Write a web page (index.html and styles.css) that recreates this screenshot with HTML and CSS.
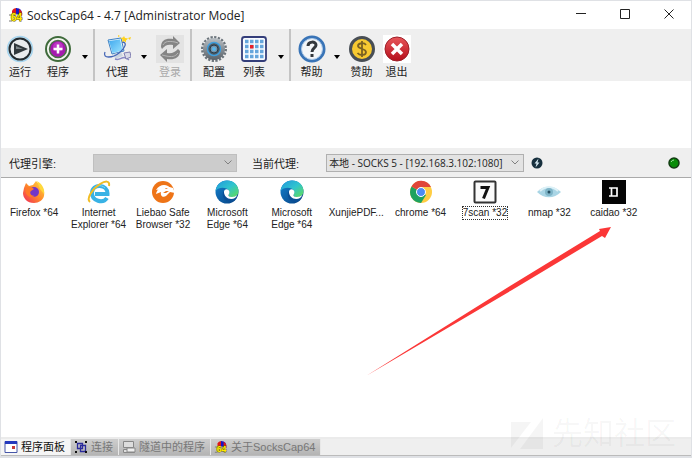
FILE: index.html
```html
<!DOCTYPE html>
<html lang="zh-CN">
<head>
  <meta charset="UTF-8" />
  <title>SocksCap64 - 4.7</title>
  <meta name="viewport" content="width=device-width, initial-scale=1.0"/>
  <link rel="stylesheet" href="styles.css">
</head>
<body>
  <!-- shared icons -->
  <svg class="defs" aria-hidden="true">
    <defs>
      <linearGradient id="edgeTop" x1="0" y1="0" x2="1" y2="1"><stop offset="0" stop-color="#2196dc"/><stop offset=".5" stop-color="#2fc4cf"/><stop offset="1" stop-color="#62dd55"/></linearGradient>
      <linearGradient id="edgeLow" x1="0" y1="0" x2="1" y2="1"><stop offset="0" stop-color="#1482cf"/><stop offset="1" stop-color="#073f80"/></linearGradient>
      <linearGradient id="metal" x1="0" y1="0" x2="0" y2="1"><stop offset="0" stop-color="#b9bfc4"/><stop offset="1" stop-color="#596168"/></linearGradient>
      <linearGradient id="fire" x1="1" y1="0" x2="0" y2="1"><stop offset="0" stop-color="#ffe047"/><stop offset=".5" stop-color="#ff8a2a"/><stop offset="1" stop-color="#f0255e"/></linearGradient>
      <linearGradient id="red" x1="0" y1="0" x2="0" y2="1"><stop offset="0" stop-color="#e8565a"/><stop offset="1" stop-color="#b50f1b"/></linearGradient>
      <linearGradient id="screen" x1="0" y1="0" x2="1" y2="1"><stop offset="0" stop-color="#40a8ee"/><stop offset="1" stop-color="#9be4ff"/></linearGradient>
    </defs>
    <symbol id="app" viewBox="0 0 16 16">
      <path d="M4 4Q5 1 9 1v6H4z" fill="#e01818"/>
      <path d="M8 1Q15 1 14 9L11 8 8 7z" fill="#1616c8"/>
      <path d="M11 2Q15 4 14 9l-3-2z" fill="#e01818"/>
      <path d="M1 8h3M1 14h3" stroke="#777"/>
      <text class="app-digits" x="3" y="14">64</text>
    </symbol>
    <symbol id="edge" viewBox="0 0 24 24">
      <circle cx="12" cy="12" r="11.500" fill="url(#edgeLow)"/>
      <path d="M.6 11C1.500 4.500 6.500.5 12 .5c7 0 11.500 5 11.500 10.500 0 4-3 6-6.500 6-2.500 0-4-1-3.500-2 1.500-2 1-5-2-6.500C8 7 3 7.500.6 11z" fill="url(#edgeTop)"/>
      <path d="M8.500 11c-2 4 0 9.500 5 10.800 3 .6 6-1 8-3.800-5 2.500-11 .5-13-7z" fill="#0a4f96"/>
      <path d="M9 11.500C9.500 9 12 8.500 13.500 10c1.500 1.500 1 3.500 0 5-.5 1 1 2 3.500 2 2 0 4-.7 5.200-2-1 2.500-3 4-6 4-4 0-7.500-3.500-7.200-7.500z" fill="#fff"/>
    </symbol>
  </svg>

  <div class="window">
    <header class="titlebar">
      <svg class="app-icon"><use href="#app"/></svg>
      <h1>SocksCap64 - 4.7 [Administrator Mode]</h1>
      <div class="window-controls">
        <button aria-label="Minimize"><svg viewBox="0 0 10 10"><path d="M0 4.500h10"/></svg></button>
        <button aria-label="Maximize"><svg viewBox="0 0 10 10"><path d="M.5.5h9v9h-9z"/></svg></button>
        <button aria-label="Close"><svg viewBox="0 0 10 10"><path d="M.5.5l9 9M9.500.5l-9 9"/></svg></button>
      </div>
    </header>

    <nav class="toolbar">
      <div class="group">
        <button class="tool">
          <svg viewBox="0 0 28 28"><circle cx="14" cy="14" r="12.500" fill="#d7e5ed" stroke="#a5d4ee" stroke-width="1.500"/><circle cx="14" cy="14" r="10.500" fill="#e8ebed" stroke="#222b30" stroke-width="2"/><path d="M8 8l14 6-14 6z" fill="#30383c"/><path d="M10 11l7 3h-7z" fill="#7d868a"/></svg>
          <span>运行</span>
        </button>
        <button class="tool">
          <svg viewBox="0 0 28 28"><circle cx="14" cy="14" r="12" fill="#f5f8f2" stroke="#3f6b3b" stroke-width="2"/><circle cx="14" cy="14" r="8.500" fill="#a51bae" stroke="#4a7047" stroke-width="1.500"/><circle cx="14" cy="12" r="5" fill="#bd37c5"/><path d="M14 9.500v9M9.500 14h9" stroke="#fff" stroke-width="2.500"/></svg>
          <span>程序</span>
        </button>
        <button class="drop" aria-label="程序菜单"></button>
      </div>
      <div class="group">
        <button class="tool">
          <svg viewBox="0 0 28 28"><path d="M5 5l13-2 3 13-12 3z" fill="#e7f3fb" stroke="#3f83c5"/><path d="M6 6l11-1.500 2.500 11L9.500 18z" fill="url(#screen)"/><path d="M11 19l7-2 2 4-8 3z" fill="#ccd5e0"/><path d="M19 7c6 0 3 6-3 11S-1 24 2 17" fill="none" stroke="#4365b5" stroke-width="1.300"/><path d="M12 24c5 2 7-3 11-1l3 2" fill="none" stroke="#8788c5" stroke-width="1.500"/><path d="M21 18l6-1 1 5-5 2z" fill="#d9dae8" stroke="#8280b2"/><path d="M21 1l1 2 3 .5-2 2v2L21 6l-2 1 .5-2.500L17 3l3-.5zM25 3l3-1-1 3zM15 0l2 1-2 1z" fill="#ffd21c"/></svg>
          <span>代理</span>
        </button>
        <button class="drop" aria-label="代理菜单"></button>
        <button class="tool" disabled>
          <svg viewBox="0 0 28 28"><path fill="#e3e3e3" d="M0 0h28v28H0z"/><path d="M5 12C5 5 10 3 17 4l0-3 7 7-7 6v-4C12 9 9 10 6 14z" fill="#858585"/><path d="M24 16c0 7-6 9-13 8v3l-7-7 7-6v4c5 1 8-1 11-4z" fill="#858585"/><path d="M7 10c2-4 6-4 12-3l3 1M22 18c-3 4-6 4-12 3l-4-1" fill="none" stroke="#b7b7b7"/></svg>
          <span>登录</span>
        </button>
      </div>
      <div class="group wide">
        <button class="tool">
          <svg viewBox="0 0 28 28"><circle cx="14" cy="14" r="11.500" fill="none" stroke="#6b747b" stroke-width="3" stroke-dasharray="2.200 1.400"/><circle cx="14" cy="14" r="11" fill="url(#metal)"/><circle cx="14" cy="14" r="6.500" fill="#4f5961" stroke="#3f9fde" stroke-width="1.500"/><circle cx="14" cy="14" r="4" fill="#7793a8" stroke="#263c4b"/><circle cx="14" cy="14" r="2" fill="#58b7ec"/></svg>
          <span>配置</span>
        </button>
        <div class="split">
          <button class="tool">
            <svg viewBox="0 0 28 28"><rect x="2" y="2" width="24" height="24" rx="2.500" fill="#f8fbff" stroke="#343e7a" stroke-width="1.800"/><path d="M5 6.500h19M5 11.500h19M5 16.500h19M5 21.500h19" stroke="#65a6dc" stroke-width="3.400" stroke-dasharray="3.500 1.500"/><path d="M10 10h3.500v3.500H10z" fill="#e81f27"/></svg>
            <span>列表</span>
          </button>
          <button class="drop" aria-label="列表菜单"></button>
        </div>
      </div>
      <div class="group compact">
        <button class="tool">
          <svg viewBox="0 0 28 28"><circle cx="14" cy="14" r="12" fill="#f4f6f8" stroke="#3974b7" stroke-width="3"/><circle cx="14" cy="14" r="10.500" fill="none" stroke="#adc9e8"/><path d="M10 11c0-5 8-5 8-1 0 3-4 3-4 7" fill="none" stroke="#34383d" stroke-width="3"/><path d="M12.500 19h3v3h-3z" fill="#34383d"/></svg>
          <span>帮助</span>
        </button>
        <button class="drop" aria-label="帮助菜单"></button>
        <button class="tool">
          <svg viewBox="0 0 28 28"><circle cx="14" cy="14" r="11.500" fill="#f7c931" stroke="#484e55" stroke-width="3"/><path d="M18 10c-2-3-8-2-8 1s8 2.500 8 6-6 4-8.500 1M14 6v16" fill="none" stroke="#7a6122" stroke-width="1.800"/></svg>
          <span>赞助</span>
        </button>
        <button class="tool">
          <svg viewBox="0 0 28 28"><path fill="#fff" d="M0 0h28v28H0z"/><circle cx="14" cy="14" r="12" fill="url(#red)" stroke="#9d2029"/><path d="M9 9l10 10M19 9L9 19" stroke="#fff" stroke-width="3.500"/></svg>
          <span>退出</span>
        </button>
      </div>
    </nav>

    <div class="banner"></div>

    <div class="proxybar">
      <label for="engine">代理引擎:</label>
      <select id="engine" class="engine" disabled><option></option></select>
      <label for="proxy">当前代理:</label>
      <select id="proxy" class="proxy"><option>本地 - SOCKS 5 - [192.168.3.102:1080]</option></select>
      <button class="test" aria-label="测试代理">
        <svg viewBox="0 0 12 12"><circle cx="6" cy="6" r="5.500" fill="#17303e"/><path d="M7.500 1.500L3.500 6.500h2l-1 4 4-5h-2z" fill="#d4e6ef"/></svg>
      </button>
      <svg class="led" viewBox="0 0 12 12"><circle cx="6" cy="6" r="5" fill="#078b07" stroke="#123c12" stroke-width="1.500"/><path d="M3 5q1-2 3-2" fill="none" stroke="#9ee29e"/></svg>
    </div>

    <main class="panel">
      <ul class="apps">
        <li>
          <svg viewBox="0 0 24 24"><path d="M2 8l2-5 3 3 4-1 3-4 3 3c4 3 6 7 5 12-1 4-5 7-10 7C5 23 1 18 1 13z" fill="url(#fire)"/><path d="M15 1c5 3 8 8 7 13l-4-5z" fill="#ffd83c"/><circle cx="12" cy="12" r="5" fill="#7136c8"/><path d="M4 8c3-2 6-1 8 1l-3 2c-2 2 0 5 4 5-6 3-11-2-9-8z" fill="#ff7a28"/></svg>
          <span>Firefox *64</span>
        </li>
        <li>
          <svg viewBox="0 0 24 24"><path d="M20 18C16 24 5 21 5 13 5 3 21 4 20.500 14H8" fill="none" stroke="#39b2e5" stroke-width="4"/><path d="M6 11c1-6 8-7 12-3" fill="none" stroke="#83d5f4"/><path d="M3 22C-1 19 5 9 13 4c5-3 10-4 9 2" fill="none" stroke="#f1bd25" stroke-width="2"/></svg>
          <span>Internet<br>Explorer *64</span>
        </li>
        <li>
          <svg viewBox="0 0 24 24"><circle cx="12" cy="12" r="11" fill="#ee7417"/><path d="M24 13l-5-1-4 4c-3 2-6 0-5-4l-5 2c1-5 5-8 10-8l7 2z" fill="#fff"/><path d="M5 10c3-5 8-6 12-4l3 3-4 1-5-1z" fill="#fff"/><path d="M14 8l3 0-2 1z" fill="#ee7417"/><path d="M12 13l3-2 3 0-3 2z" fill="#ee7417"/></svg>
          <span>Liebao Safe<br>Browser *32</span>
        </li>
        <li><svg><use href="#edge"/></svg><span>Microsoft<br>Edge *64</span></li>
        <li><svg><use href="#edge"/></svg><span>Microsoft<br>Edge *64</span></li>
        <li><svg></svg><span>XunjiePDF...</span></li>
        <li>
          <svg viewBox="0 0 24 24"><circle cx="12" cy="12" r="11" fill="#ffcd43"/><path d="M12 12L2.500 6.500A11 11 0 0 0 12 23l5-8z" fill="#1da261"/><path d="M12 12L2.500 6.500A11 11 0 0 1 22 7H12z" fill="#e04438"/><circle cx="12" cy="12" r="4.500" fill="#4c8bf5" stroke="#fff" stroke-width="1"/></svg>
          <span>chrome *64</span>
        </li>
        <li>
          <svg viewBox="0 0 24 24"><rect x="1.500" y="1.500" width="21" height="21" rx="1" fill="#fafafa" stroke="#333" stroke-width="2"/><path d="M7.500 7.500h7.500L10.500 18.500" fill="none" stroke="#111" stroke-width="3"/></svg>
          <span class="focused">7scan *32</span>
        </li>
        <li>
          <svg viewBox="0 0 24 24"><path d="M0 12C6 5 17 5 24 12 17 19 7 19 0 12z" fill="#a9d5e5"/><path d="M3 11c5-5 13-5 18 0" fill="none" stroke="#ddf1f7" stroke-width="2"/><circle cx="12" cy="12" r="4" fill="#7fb5c8"/><circle cx="12" cy="12" r="1.500" fill="#244e61"/></svg>
          <span>nmap *32</span>
        </li>
        <li>
          <svg viewBox="0 0 24 24"><path fill="#050505" d="M0 0h24v24H0z"/><path d="M7 8h8v8H7M9.500 8v8" fill="none" stroke="#fff" stroke-width="1.700"/></svg>
          <span>caidao *32</span>
        </li>
      </ul>
    </main>

    <footer class="tabs">
      <button class="tab active">
        <svg viewBox="0 0 14 14"><path d="M1 1.500h12v11H1z" fill="#fff" stroke="#4656a8"/><path d="M1 1h12v3H1z" fill="#2439bd"/><path d="M8 6h3v3H8z" fill="#c43a3a"/></svg>
        <span>程序面板</span>
      </button>
      <button class="tab">
        <svg viewBox="0 0 14 14"><path d="M3.500 3.500h5v5h-5zM6.500 5.500h5v6h-5z" fill="none" stroke="#2a2a9c" stroke-width="1.300"/><path d="M1 1h2v2H1zM11 1h2v2h-2zM1 11h2v2H1zM11 11h2v2h-2z" fill="#111"/></svg>
        <span>连接</span>
      </button>
      <button class="tab">
        <svg viewBox="0 0 14 14"><path d="M1.500 1.500h10v6h-10zM1.500 9.500h11v3h-11z" fill="#ddd" stroke="#888"/><path d="M5 8h8v4H5z" fill="#eee" stroke="#888"/></svg>
        <span>隧道中的程序</span>
      </button>
      <button class="tab">
        <svg viewBox="0 0 16 16"><use href="#app"/></svg>
        <span>关于SocksCap64</span>
      </button>
    </footer>
  </div>

  <svg class="arrow" viewBox="0 0 248 152"><path d="M1 149L145 59 235 4 234 2 246 0 240 11 237 9 147 63z" fill="#fb3737"/></svg>
  <div class="watermark">
    <svg viewBox="0 0 32 32"><path d="M0 4h20L0 30zM32 0v31H9z"/></svg>
    <span>先知社区</span>
  </div>
</body>
</html>
```
FILE: styles.css
```css
* {
  box-sizing: border-box;
}
body {
  margin: 0;
  height: 100vh;
  padding: 1px 1px 2px;
  position: relative;
  overflow: hidden;
  background-color: #dfe1e5;
  color: #222;
  font-family: "Liberation Sans", "Noto Sans CJK SC", sans-serif;
  font-size: 11px;
}
button {
  border: none;
  padding: 0;
  background: none;
  color: inherit;
  font: inherit;
}
.defs {
  position: absolute;
  width: 0;
  height: 0;
}
.window {
  display: flex;
  flex-direction: column;
  height: 100%;
  background-color: #fff;
}
.titlebar {
  display: flex;
  align-items: center;
  height: 28px;
  padding-left: 7px;
  flex: none;
}
.app-icon {
  width: 16px;
  height: 16px;
}
.app-digits {
  fill: #ffea00;
  stroke: #6b6000;
  stroke-width: 1px;
  paint-order: stroke;
  font: bold 10px "Liberation Sans", sans-serif;
}
h1 {
  margin: 0 auto 0 3px;
  font: 12px "Open Sans", sans-serif;
}
.window-controls {
  display: flex;
}
.window-controls button {
  width: 44px;
  height: 28px;
}
.window-controls svg {
  width: 10px;
  height: 10px;
  fill: none;
  stroke: #222;
}
.toolbar {
  display: flex;
  height: 52px;
  flex: none;
  background-color: #efefef;
}
.group {
  display: flex;
  padding-right: 1px;
  margin-right: 3px;
  border-right: 2px solid #c4c4c4;
}
.group:last-child {
  border: none;
}
.wide {
  gap: 2px;
}
.split {
  display: flex;
}
.tool {
  display: flex;
  flex-direction: column;
  align-items: center;
  width: 38px;
  padding-top: 6px;
  line-height: 18px;
}
.compact .tool {
  width: 35px;
}
.tool svg {
  width: 28px;
  height: 28px;
}
.tool:disabled {
  color: #aaa;
}
.drop {
  width: 15px;
}
.drop::before {
  content: "";
  display: block;
  width: 0;
  margin: 3px auto 0;
  border: 3px solid transparent;
  border-top: 4px solid #000;
  border-bottom: none;
}
.banner {
  height: 67px;
  flex: none;
}
.proxybar {
  display: flex;
  align-items: center;
  height: 30px;
  padding: 0 11px 0 8px;
  flex: none;
  background-color: #efefef;
  border-bottom: 1px solid #aaa;
}
select {
  appearance: none;
  height: 18px;
  padding: 0 2px;
  border: 1px solid #b0b0b0;
  border-radius: 0;
  background: #e3e3e3 url("data:image/svg+xml,%3Csvg xmlns='http://www.w3.org/2000/svg' width='8' height='5'%3E%3Cpath d='M.5.5L4 4 7.500.5' fill='none' stroke='%23808080'/%3E%3C/svg%3E") no-repeat right 4px center;
  color: #222;
  font: 10px "Open Sans", "Noto Sans CJK SC", sans-serif;
}
.engine {
  width: 144px;
  margin: 0 15px 0 37px;
}
.engine:disabled {
  background-color: #ccc;
  border-color: #bfbfbf;
  opacity: 1;
}
.proxy {
  width: 198px;
  margin: 0 7px 0 27px;
}
.test {
  display: flex;
}
.test svg,
.led {
  width: 12px;
  height: 12px;
}
.led {
  margin-left: auto;
}
.panel {
  flex: 1;
  border-bottom: 2px solid #ebebeb;
}
.apps {
  display: grid;
  grid-template-columns: repeat(10, 1fr);
  margin: 0;
  padding: 2px 45px 0 1px;
  list-style: none;
  font-size: 10px;
  line-height: 12px;
  text-align: center;
}
.apps li {
  display: flex;
  flex-direction: column;
  align-items: center;
  gap: 3px;
}
.apps svg {
  width: 24px;
  height: 24px;
}
.focused {
  outline: 1px dotted #333;
}
.tabs {
  display: flex;
  height: 17px;
  flex: none;
  background-color: #efefef;
  border-bottom: 1px solid #bbb;
}
.tab {
  display: flex;
  align-items: center;
  gap: 3px;
  padding: 0 5px 0 3px;
  border-right: 1px solid #e8e8e8;
  background: linear-gradient(#cecece, #b4b4b4);
  color: #777;
  line-height: 16px;
}
.tab svg {
  width: 14px;
  height: 14px;
}
.tab.active {
  background: #f5f5f5;
  color: #111;
}
/* annotation drawn over the list */
.arrow {
  position: absolute;
  left: 365px;
  top: 227px;
  width: 248px;
  height: 152px;
}
.watermark {
  position: absolute;
  right: 16px;
  bottom: 8px;
  display: flex;
  align-items: center;
  gap: 9px;
  color: rgba(0, 0, 0, 0.04);
  font-size: 31px;
  line-height: 32px;
}
.watermark svg {
  width: 32px;
  height: 32px;
  fill: currentColor;
}
```
